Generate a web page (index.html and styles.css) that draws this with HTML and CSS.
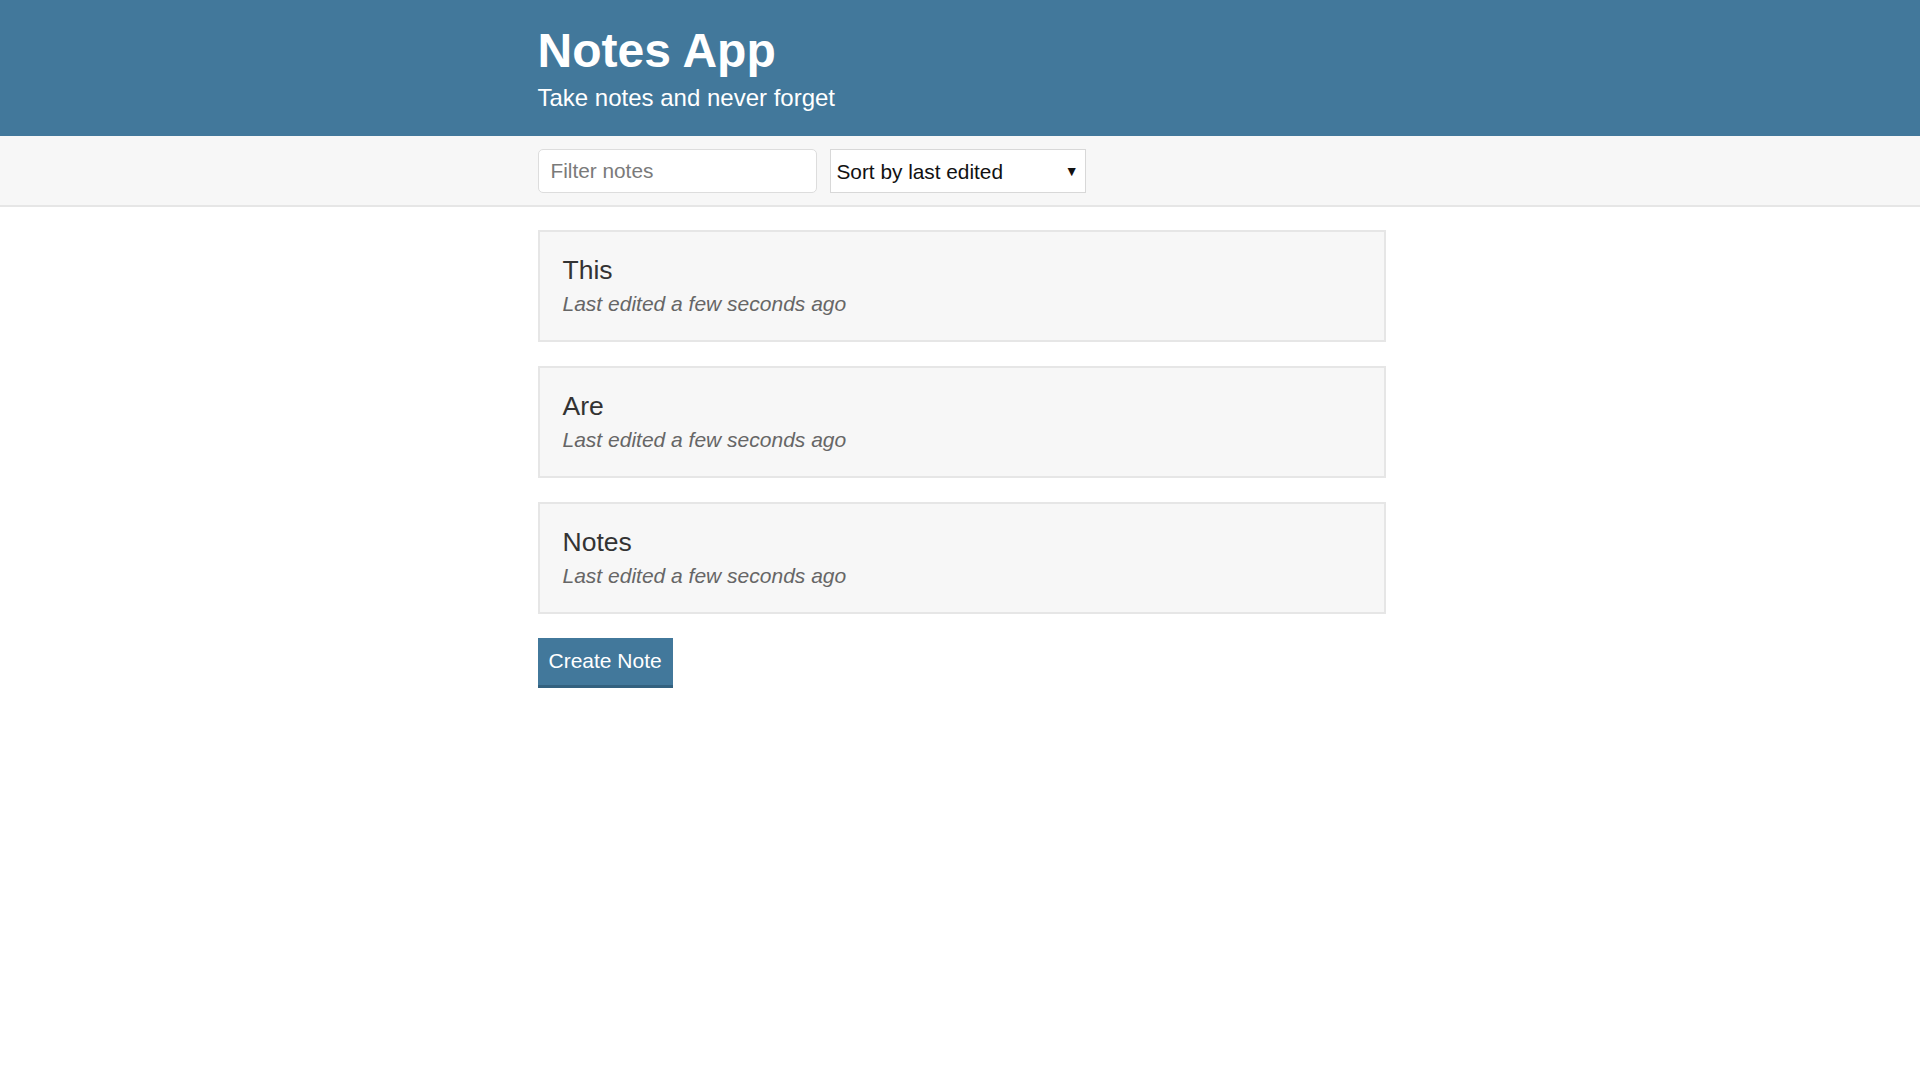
FILE: index.html
```html
<!DOCTYPE html>
<html>
<head>
    <meta charset="UTF-8" />
    <meta name="viewport" content="width=device-width, initial-scale=1.0"/>
    <title>Notes App</title>
    <link rel="stylesheet" href="styles.css">
</head>
<body>
    <header class="header">
        <div class="container">
            <h1 class="header-title">Notes App</h1>
            <p class="header-subtitle">Take notes and never forget</p>
        </div>
    </header>

    <div class="actions">
        <div class="container actions-row">
            <input class="input" type="text" placeholder="Filter notes">
            <div class="select-wrap">
                <select class="select">
                    <option>Sort by last edited</option>
                    <option>Sort by recently created</option>
                    <option>Sort alphabetically</option>
                </select>
            </div>
        </div>
    </div>

    <main class="container content">
        <!-- 笔记列表 -->
        <a class="note" href="#">
            <p class="note-title">This</p>
            <p class="note-meta">Last edited a few seconds ago</p>
        </a>
        <a class="note" href="#">
            <p class="note-title">Are</p>
            <p class="note-meta">Last edited a few seconds ago</p>
        </a>
        <a class="note" href="#">
            <p class="note-title">Notes</p>
            <p class="note-meta">Last edited a few seconds ago</p>
        </a>

        <button class="button">Create Note</button>
    </main>
</body>
</html>
```

FILE: styles.css
```css
/* 重置 */
* {
    margin: 0;
    padding: 0;
    box-sizing: border-box;
}
body {
    font-family: "Liberation Sans", Arial, sans-serif;
    color: #333333;
    background: #ffffff;
}
.container {
    max-width: 851px;
    margin: 0 auto;
    padding-left: 3px;
}

/* 顶部标题栏 */
.header {
    background: #42789b;
    color: #ffffff;
    padding: 23px 0 24px;
}
.header-title {
    font-size: 48px;
    line-height: 56px;
    font-weight: bold;
}
.header-subtitle {
    margin-top: 5px;
    font-size: 24px;
    line-height: 28px;
}

/* 过滤 + 排序 */
.actions {
    background: #f7f7f7;
    border-bottom: 2px solid #e6e6e6;
    padding: 13px 0 12px;
}
.actions-row {
    display: flex;
    gap: 13px;
}
.input {
    width: 279px;
    height: 44px;
    border: 1px solid #dddddd;
    border-radius: 5px;
    padding: 0 12px;
    font-family: inherit;
    font-size: 20.8px;
    color: #333333;
    background: #ffffff;
    outline: none;
}
.input::placeholder {
    color: #7a7a7a;
}
.select-wrap {
    position: relative;
}
.select-wrap::after {
    content: "▼";
    position: absolute;
    right: 7px;
    top: 50%;
    transform: translateY(-50%);
    font-size: 14px;
    line-height: 14px;
    color: #111111;
    pointer-events: none;
}
.select {
    -webkit-appearance: none;
    appearance: none;
    width: 256px;
    height: 44px;
    border: 1px solid #d8d8d8;
    border-radius: 0;
    padding: 0 6px;
    font-family: inherit;
    font-size: 20.8px;
    color: #111111;
    background: #ffffff;
    outline: none;
}

/* 笔记卡片 */
.content {
    padding-top: 23px;
}
.note {
    display: block;
    text-decoration: none;
    background: #f7f7f7;
    border: 2px solid #e6e6e6;
    padding: 22px 23px 23px;
    margin-bottom: 24px;
}
.note-title {
    font-size: 26.5px;
    line-height: 32px;
    color: #333333;
}
.note-meta {
    margin-top: 5px;
    font-size: 21px;
    line-height: 26px;
    font-style: italic;
    color: #666666;
}

/* 按钮 */
.button {
    font-family: inherit;
    font-size: 21px;
    line-height: 24px;
    color: #ffffff;
    background: #42789b;
    border: none;
    border-bottom: 3px solid #33617f;
    padding: 11px 11px 12px;
    cursor: pointer;
}
```
